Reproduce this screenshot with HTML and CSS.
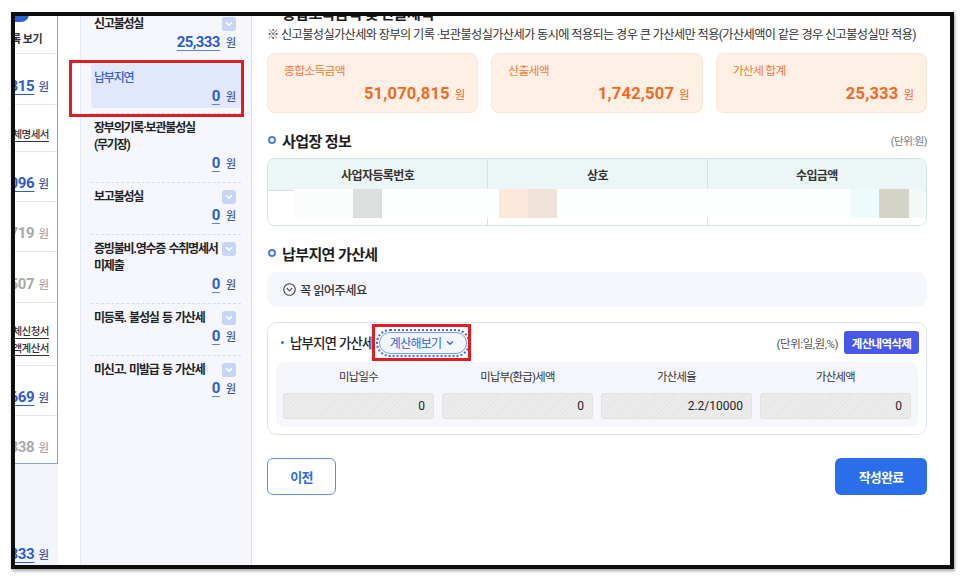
FILE: index.html
```html
<!DOCTYPE html>
<html lang="ko">
<head>
<meta charset="utf-8">
<title>납부지연 가산세</title>
<link rel="stylesheet" href="styles.css">
</head>
<body>
<div class="frame">
  <div class="clip-col">
    <div class="prev-panel">
      <div class="prow r38 top"><span class="ppill"></span><span class="plink">목록 보기</span></div>
      <div class="prow r51"><span class="pval"><b>51,070,815</b><i>원</i></span></div>
      <div class="prow r47"><span class="pdoc">대체명세서</span></div>
      <div class="prow r50"><span class="pval"><b>1,096</b><i>원</i></span></div>
      <div class="prow r50"><span class="pval gray"><b>1,719</b><i>원</i></span></div>
      <div class="prow r51"><span class="pval gray"><b>1,507</b><i>원</i></span></div>
      <div class="prow r63"><span class="pdoc">대체신청서</span><span class="pdoc">금액계산서</span></div>
      <div class="prow r50"><span class="pval"><b>1,669</b><i>원</i></span></div>
      <div class="prow r48 last"><span class="pval gray"><b>1,338</b><i>원</i></span></div>
    </div>
    <div class="prev-total"><span class="pval"><b>25,333</b><i>원</i></span></div>
  </div>

  <aside class="side">
    <div class="sitem first">
      <div class="stitle"><span>신고불성실</span><svg class="chev" viewBox="0 0 14 14"><rect width="14" height="14" rx="3" fill="#c6d5f4"/><path d="M4.5 5.8 L7 8.3 L9.5 5.8" fill="none" stroke="#fff" stroke-width="1.5" stroke-linecap="round" stroke-linejoin="round"/></svg></div>
      <div class="sval"><span class="num">25,333</span><span class="won">원</span></div>
    </div>
    <div class="sitem active">
      <div class="active-box">
        <div class="stitle blue"><span>납부지연</span></div>
        <div class="sval"><span class="num">0</span><span class="won">원</span></div>
        <span class="mark mark-side"></span>
      </div>
    </div>
    <div class="sitem">
      <div class="stitle"><span>장부의기록·보관불성실<br>(무기장)</span></div>
      <div class="sval"><span class="num">0</span><span class="won">원</span></div>
    </div>
    <div class="sitem">
      <div class="stitle"><span>보고불성실</span><svg class="chev" viewBox="0 0 14 14"><rect width="14" height="14" rx="3" fill="#c6d5f4"/><path d="M4.5 5.8 L7 8.3 L9.5 5.8" fill="none" stroke="#fff" stroke-width="1.5" stroke-linecap="round" stroke-linejoin="round"/></svg></div>
      <div class="sval"><span class="num">0</span><span class="won">원</span></div>
    </div>
    <div class="sitem">
      <div class="stitle"><span>증빙불비.영수증 수취명세서<br>미제출</span><svg class="chev" viewBox="0 0 14 14"><rect width="14" height="14" rx="3" fill="#c6d5f4"/><path d="M4.5 5.8 L7 8.3 L9.5 5.8" fill="none" stroke="#fff" stroke-width="1.5" stroke-linecap="round" stroke-linejoin="round"/></svg></div>
      <div class="sval"><span class="num">0</span><span class="won">원</span></div>
    </div>
    <div class="sitem">
      <div class="stitle"><span>미등록. 불성실 등 가산세</span><svg class="chev" viewBox="0 0 14 14"><rect width="14" height="14" rx="3" fill="#c6d5f4"/><path d="M4.5 5.8 L7 8.3 L9.5 5.8" fill="none" stroke="#fff" stroke-width="1.5" stroke-linecap="round" stroke-linejoin="round"/></svg></div>
      <div class="sval"><span class="num">0</span><span class="won">원</span></div>
    </div>
    <div class="sitem">
      <div class="stitle"><span>미신고. 미발급 등 가산세</span><svg class="chev" viewBox="0 0 14 14"><rect width="14" height="14" rx="3" fill="#c6d5f4"/><path d="M4.5 5.8 L7 8.3 L9.5 5.8" fill="none" stroke="#fff" stroke-width="1.5" stroke-linecap="round" stroke-linejoin="round"/></svg></div>
      <div class="sval"><span class="num">0</span><span class="won">원</span></div>
    </div>
  </aside>

  <main class="main">
    <div class="sec-head cut"><h2 class="h"><span class="ring"></span>종합소득금액 및 산출세액</h2></div>
    <p class="note">※ 신고불성실가산세와 장부의 기록 ·보관불성실가산세가 동시에 적용되는 경우 큰 가산세만 적용(가산세액이 같은 경우 신고불성실만 적용)</p>
    <div class="cards">
      <div class="card"><div class="card-label">종합소득금액</div><div class="card-val"><b>51,070,815</b><span>원</span></div></div>
      <div class="card"><div class="card-label">산출세액</div><div class="card-val"><b>1,742,507</b><span>원</span></div></div>
      <div class="card"><div class="card-label">가산세 합계</div><div class="card-val"><b>25,333</b><span>원</span></div></div>
    </div>

    <div class="sec-head gap"><h2 class="h"><span class="ring"></span>사업장 정보</h2><span class="unit">(단위:원)</span></div>
    <div class="table">
      <div class="trow thead"><div>사업자등록번호</div><div>상호</div><div>수입금액</div></div>
      <div class="trow tbody"><div></div><div></div><div></div></div>
      <div class="mosaic">
        <span class="m1"></span><span class="m2"></span><span class="m3"></span><span class="m4"></span><span class="m5"></span><span class="m6"></span><span class="m7"></span><span class="m8"></span><span class="m9"></span>
      </div>
    </div>

    <div class="sec-head gap"><h2 class="h"><span class="ring"></span>납부지연 가산세</h2></div>
    <div class="accordion">
      <svg class="acc-icon" viewBox="0 0 14 14"><circle cx="7" cy="7" r="6.2" fill="none" stroke="#444" stroke-width="1.2"/><path d="M4.4 5.9 L7 8.5 L9.6 5.9" fill="none" stroke="#444" stroke-width="1.2" stroke-linecap="round" stroke-linejoin="round"/></svg>
      <span>꼭 읽어주세요</span>
    </div>

    <section class="calc">
      <div class="calc-head">
        <div class="calc-title">
          <span class="dot"></span><span>납부지연 가산세</span>
          <span class="calc-btn-wrap">
            <button class="calc-btn">계산해보기<svg viewBox="0 0 10 10"><path d="M2.5 3.8 L5 6.3 L7.5 3.8" fill="none" stroke="#2f66df" stroke-width="1.3" stroke-linecap="round" stroke-linejoin="round"/></svg></button>
            <span class="mark mark-btn"></span>
          </span>
        </div>
        <div class="calc-right"><span class="unit dark">(단위:일,원,%)</span><button class="del-btn">계산내역삭제</button></div>
      </div>
      <div class="calc-grid">
        <div class="lbl">미납일수</div>
        <div class="lbl">미납부(환급)세액</div>
        <div class="lbl">가산세율</div>
        <div class="lbl">가산세액</div>
        <div class="inp">0</div>
        <div class="inp">0</div>
        <div class="inp">2.2/10000</div>
        <div class="inp">0</div>
      </div>
    </section>

    <div class="actions">
      <button class="btn-prev">이전</button>
      <button class="btn-done">작성완료</button>
    </div>
  </main>
</div>
</body>
</html>
```

FILE: styles.css
```css
* { box-sizing: border-box; margin: 0; padding: 0; }
html, body { background: #fff; }
body {
  width: 966px;
  height: 582px;
  overflow: hidden;
  font-family: Roboto, "Noto Sans CJK KR", sans-serif;
  color: #222;
}
button { font-family: inherit; cursor: pointer; }

.frame {
  position: relative;
  margin: 12px 0 0 11px;
  width: 943px;
  height: 557px;
  border: 4px solid #0e0e0e;
  box-shadow: 1px 2px 3px rgba(0, 0, 0, 0.35);
  background: #fff;
  display: flex;
  overflow: hidden;
}

/* ---------- left clipped panel ---------- */
.clip-col {
  width: 43px;
  flex-shrink: 0;
  margin-right: 22px;
  display: flex;
  flex-direction: column;
  align-items: flex-end;
  overflow: hidden;
}
.prev-panel {
  width: 170px;
  flex-shrink: 0;
  border-right: 1px solid #7ea2e6;
  border-bottom: 1px solid #7ea2e6;
}
.prow {
  display: flex;
  flex-direction: column;
  justify-content: flex-end;
  align-items: flex-end;
  padding: 0 8px 8px 0;
  border-bottom: 1px solid #dfe7f6;
}
.prow.last { border-bottom: 0; padding-bottom: 6px; }
.r38 { height: 38px; }
.r47 { height: 47px; }
.r48 { height: 47px; }
.r50 { height: 50px; }
.r51 { height: 51px; }
.r63 { height: 63px; }
.prow.top { justify-content: space-between; padding: 0 15px 5px 0; }
.ppill {
  display: block;
  width: 80px;
  height: 16px;
  margin: -10px 13px 0 0;
  background: #2d5fd2;
  border-radius: 8px;
}
.plink {
  font-size: 11px;
  line-height: 16px;
  font-weight: 700;
  color: #333;
  letter-spacing: -0.05em;
}
.pval { display: flex; align-items: baseline; line-height: 18px; }
.pval b {
  font-size: 15px;
  font-weight: 700;
  color: #2c5cd2;
  letter-spacing: -0.3px;
  text-decoration: underline;
  text-decoration-thickness: 1px;
  text-underline-offset: 3px;
}
.pval i {
  font-style: normal;
  font-size: 11.5px;
  font-weight: 500;
  color: #3b58ae;
  margin-left: 4px;
}
.pval.gray b { color: #a9a9a9; text-decoration: none; }
.pval.gray i { color: #a9a9a9; }
.pdoc {
  font-size: 10.5px;
  line-height: 17px;
  font-weight: 500;
  color: #333;
  letter-spacing: -0.05em;
  text-decoration: underline;
  text-underline-offset: 3px;
}
.prev-total {
  flex: 1;
  width: 170px;
  flex-shrink: 0;
  background: #f3f5fb;
  display: flex;
  justify-content: flex-end;
  align-items: flex-end;
  padding: 0 9px 1px 0;
}

/* ---------- sidebar ---------- */
.side {
  width: 172px;
  flex-shrink: 0;
  background: #f5f7fc;
  border-left: 1px solid #e2e8f5;
  border-right: 1px solid #dbe3f3;
  padding: 0 10px;
}
.sitem {
  padding: 6px 3px 10px;
  border-top: 1px dashed #d3dbee;
}
.sitem.first { border-top: 0; padding-top: 0; }
.sitem.active { padding: 2px 0 5.5px; }
.active-box {
  position: relative;
  background: #e1e8fb;
  border-radius: 4px;
  padding: 5.5px 3px 3px;
}
.stitle {
  display: flex;
  justify-content: space-between;
  align-items: flex-start;
  font-size: 12px;
  line-height: 17px;
  font-weight: 700;
  color: #222;
  letter-spacing: -0.1em;
  word-spacing: 1.5px;
}
.stitle.blue { color: #3563d6; font-weight: 500; }
.chev { width: 14px; height: 14px; flex-shrink: 0; margin: 1px 2px 0 4px; }
.sval {
  display: flex;
  justify-content: flex-end;
  align-items: baseline;
  height: 18px;
  padding-right: 2px;
}
.num {
  font-size: 15px;
  line-height: 18px;
  font-weight: 700;
  color: #2c5cd2;
  letter-spacing: -0.6px;
  text-decoration: underline;
  text-decoration-color: #5b83e0;
  text-decoration-thickness: 1px;
  text-underline-offset: 3px;
}
.won {
  font-size: 11px;
  line-height: 18px;
  font-weight: 500;
  color: #4a5a88;
  margin-left: 6px;
}

/* annotation marks */
.mark {
  position: absolute;
  border: 3px solid #e31c24;
  pointer-events: none;
}
.mark-side { left: -22px; right: -3px; top: -4px; bottom: -9px; }
.mark-btn { left: -7px; right: -4px; top: -8px; bottom: -7px; }

/* ---------- main ---------- */
.main {
  flex: 1;
  min-width: 0;
  padding: 0 23px 0 15px;
}
.sec-head {
  display: flex;
  justify-content: space-between;
  align-items: center;
  height: 20px;
}
.sec-head.cut { margin-top: -14px; }
.sec-head.gap { margin-top: 17px; }
.h {
  display: flex;
  align-items: center;
  font-size: 15px;
  font-weight: 700;
  color: #1d1d1d;
  letter-spacing: -0.04em;
}
.ring {
  width: 8px;
  height: 8px;
  border: 2px solid #4d7ee8;
  border-radius: 50%;
  margin: 0 6px 0 1px;
}
.unit {
  font-size: 10.5px;
  color: #777;
  letter-spacing: -0.04em;
}
.unit.dark { font-size: 11.5px; color: #555; }
.note {
  margin-top: 3px;
  font-size: 12.2px;
  line-height: 20px;
  color: #333;
  letter-spacing: -0.05em;
  white-space: nowrap;
}
.cards {
  display: grid;
  grid-template-columns: repeat(3, 1fr);
  gap: 13px;
  margin-top: 8px;
}
.card {
  height: 60px;
  background: #fff0e5;
  border: 1px solid #fde4d2;
  border-radius: 8px;
  padding: 9px 12px 0 16px;
}
.card-label {
  font-size: 11.8px;
  line-height: 16px;
  color: #f57a3a;
  letter-spacing: -0.06em;
}
.card-val {
  margin-top: 4px;
  display: flex;
  justify-content: flex-end;
  align-items: baseline;
  height: 22px;
  color: #f3691f;
}
.card-val b { font-size: 16.5px; line-height: 22px; font-weight: 700; letter-spacing: 0.2px; }
.card-val span { font-size: 11.5px; line-height: 22px; margin-left: 5px; }

.table {
  position: relative;
  margin-top: 8px;
  border: 1px solid #cfe4e6;
  border-radius: 8px;
  overflow: hidden;
}
.trow { display: grid; grid-template-columns: repeat(3, 1fr); }
.trow > div { border-left: 1px solid #d0e4e6; }
.trow > div:first-child { border-left: 0; }
.thead {
  height: 32px;
  background: #edf6f6;
  border-bottom: 1px solid #d0e4e6;
}
.thead > div {
  display: flex;
  align-items: center;
  justify-content: center;
  font-size: 12px;
  font-weight: 700;
  color: #333;
  letter-spacing: -0.05em;
}
.tbody { height: 34px; background: #fff; }
.mosaic {
  position: absolute;
  left: 26px;
  top: 30px;
  height: 29px;
  display: flex;
}
.mosaic span { display: block; height: 29px; }
.m1 { width: 59px; background: #fbfdfd; }
.m2 { width: 29px; background: #dcdfe0; }
.m3 { width: 117px; background: #fdfefe; }
.m4 { width: 29px; background: #fbe8da; }
.m5 { width: 29px; background: #efe3d9; }
.m6 { width: 293px; background: #fdfffe; }
.m7 { width: 29px; background: #edfbfc; }
.m8 { width: 30px; background: #d5d4c9; }
.m9 { width: 15px; background: #f4f8f7; }

.accordion {
  margin-top: 9px;
  height: 35px;
  background: #f5f7fc;
  border-radius: 10px;
  display: flex;
  align-items: center;
  padding-left: 16px;
  gap: 4px;
  font-size: 12.3px;
  font-weight: 500;
  color: #333;
  letter-spacing: -0.05em;
}
.acc-icon { width: 13px; height: 13px; }

.calc {
  margin-top: 15px;
  border: 1px solid #d8e2f4;
  border-radius: 10px;
  padding: 8px 8px 7px;
}
.calc-head {
  display: flex;
  justify-content: space-between;
  align-items: center;
  height: 23px;
  padding: 0 0 0 5px;
}
.calc-title {
  display: flex;
  align-items: center;
  font-size: 13.3px;
  font-weight: 500;
  color: #222;
  letter-spacing: -0.05em;
}
.dot {
  width: 3px;
  height: 3px;
  border-radius: 50%;
  background: #3d6fe0;
  margin-right: 6px;
}
.calc-btn-wrap { position: relative; margin-left: 5px; display: flex; }
.calc-btn {
  height: 22px;
  width: 88px;
  border: 1px solid #7a9ef0;
  border-radius: 11px;
  background: #f3f6fe;
  color: #2f66df;
  font-size: 12px;
  letter-spacing: -0.06em;
  display: flex;
  align-items: center;
  justify-content: center;
  gap: 4px;
  outline: 2px dotted #3a6fe8;
  outline-offset: 1px;
}
.calc-btn svg { width: 10px; height: 10px; }
.calc-right { display: flex; align-items: center; gap: 6px; margin-right: -1px; }
.del-btn {
  height: 23px;
  width: 75px;
  border: 0;
  border-radius: 3px;
  background: #4758e8;
  color: #fff;
  font-size: 11.5px;
  font-weight: 700;
  letter-spacing: -0.06em;
}
.calc-grid {
  margin-top: 8px;
  background: #f5f7fc;
  border-radius: 8px;
  padding: 8px 7px;
  display: grid;
  grid-template-columns: repeat(4, 1fr);
  column-gap: 8px;
  row-gap: 7px;
}
.lbl {
  text-align: center;
  font-size: 11.3px;
  line-height: 16px;
  color: #333;
  letter-spacing: -0.06em;
}
.inp {
  height: 26px;
  border: 1px solid #e1e1e1;
  border-radius: 3px;
  background: repeating-linear-gradient(135deg, #ececec 0 2px, #e5e5e5 2px 3px);
  text-align: right;
  padding-right: 8px;
  font-size: 12px;
  line-height: 24px;
  color: #222;
}

.actions {
  margin-top: 23px;
  display: flex;
  justify-content: space-between;
}
.btn-prev {
  width: 69px;
  height: 37px;
  border: 1px solid #5d8ff0;
  border-radius: 6px;
  background: #fff;
  color: #2e6de5;
  font-size: 13px;
  font-weight: 700;
  letter-spacing: -0.06em;
}
.btn-done {
  width: 92px;
  height: 37px;
  border: 0;
  border-radius: 6px;
  background: #2a6fe9;
  color: #fff;
  font-size: 13px;
  font-weight: 700;
  letter-spacing: -0.06em;
}
```
